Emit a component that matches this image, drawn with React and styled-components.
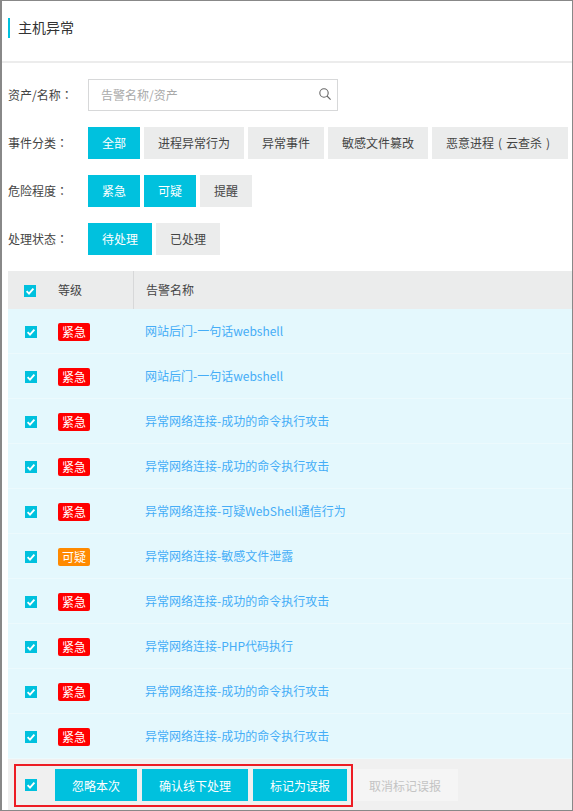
import React from "react";
import styled, { createGlobalStyle } from "styled-components";

const Global = createGlobalStyle`
  html, body { margin: 0; padding: 0; background: #fff; }
  body { font-family: "Microsoft YaHei", "Noto Sans CJK SC", "Liberation Sans", sans-serif; font-size: 12px; color: #444; }
  * { box-sizing: border-box; }
`;

const Frame = styled.div`
  position: relative;
  width: 573px;
  height: 811px;
  overflow: hidden;
  background: #fff;
  border: 1px solid #888;
  border-left-width: 2px;
  padding-left: 6px;
`;
const Header = styled.div`
  height: 62px;
  margin-left: -6px;
  padding: 17px 0 0 6px;
  border-bottom: 2px solid #ececec;
`;
const Title = styled.h1`
  margin: 0;
  height: 20px;
  padding-left: 8px;
  border-left: 2px solid #00c1de;
  font-size: 14px;
  font-weight: 400;
  line-height: 18px;
  color: #333;
`;
const Filters = styled.div`
  display: flex;
  flex-direction: column;
  gap: 16px;
  padding-top: 16px;
`;
const FilterRow = styled.div`
  display: flex;
  align-items: center;
  height: 32px;
`;
const Label = styled.span`
  flex: 0 0 80px;
  margin-bottom: 2px;
  font-size: 12px;
  color: #444;
`;
const Punct = styled.span`
  font-family: "Noto Sans CJK TC", sans-serif;
`;
const Paren = styled.span`
  display: inline-block;
  width: 12px;
  text-align: center;
`;
const SearchBox = styled.div`
  display: flex;
  align-items: center;
  justify-content: space-between;
  width: 250px;
  height: 32px;
  padding: 0 6px 2px 12px;
  border: 1px solid #d7d8d9;
  color: #444;
`;
const Placeholder = styled.span`
  color: #a9a9a9;
`;
const Chips = styled.div`
  display: flex;
  gap: 4px;
`;
const Chip = styled.button`
  height: 32px;
  padding: 0 14px 2px;
  border: 0;
  font: inherit;
  white-space: nowrap;
  background: ${(p) => (p.$active ? "#00c1de" : "#ebecec")};
  color: ${(p) => (p.$active ? "#fff" : "#444")};
`;
const Table = styled.div`
  margin-top: 16px;
  width: 564px;
`;
const HeadRow = styled.div`
  display: flex;
  align-items: center;
  height: 38px;
  background: #ebecec;
  color: #444;
`;
const HeadLevel = styled.div`
  display: flex;
  align-items: center;
  width: 126px;
  height: 100%;
  padding-left: 16px;
  border-right: 1px solid #d7d8d9;
`;
const HeadLevelText = styled.span`
  margin: 0 0 2px 22px;
`;
const HeadName = styled.div`
  margin-bottom: 2px;
  padding-left: 12px;
`;
const Row = styled.div`
  display: flex;
  align-items: center;
  height: 45px;
  padding: 1px 0 0 17px;
  background: #e4f8fd;
  border-bottom: 1px solid #ecfafd;
`;
const Check = styled.span`
  display: inline-flex;
  align-items: center;
  justify-content: center;
  flex: 0 0 12px;
  width: 12px;
  height: 12px;
  margin-top: ${(p) => p.$nudge || 0}px;
  background: #00c1de;
`;
const Badge = styled.span`
  display: inline-flex;
  align-items: center;
  justify-content: center;
  width: 32px;
  height: 18px;
  margin-left: 21px;
  border-radius: 2px;
  background: ${(p) => (p.$warn ? "#ff8a00" : "#ff0000")};
  color: #fff;
  font-size: 12px;
`;
const NameLink = styled.a`
  margin: 0 0 3px 55px;
  color: #45adf7;
  font-size: 12px;
`;
const Footer = styled.div`
  display: flex;
  align-items: center;
  height: 51px;
  padding: 1px 0 0 17px;
  background: #f0f0f0;
`;
const ActionGroup = styled.div`
  display: flex;
  gap: 5px;
  margin-left: 18px;
`;
const Action = styled.button`
  height: 32px;
  padding: 0 17px;
  border: 0;
  font: inherit;
  white-space: nowrap;
  background: ${(p) => (p.$disabled ? "#f5f5f5" : "#00c1de")};
  color: ${(p) => (p.$disabled ? "#c4c4c4" : "#fff")};
`;
const RedMark = styled.div`
  position: absolute;
  left: 12px;
  top: 763px;
  width: 339px;
  height: 43px;
  border: 2px solid #ed1c24;
  pointer-events: none;
`;

const Tick = () => (
  <svg width="10" height="10" viewBox="0 0 10 10" fill="none">
    <path d="M1.6 5.2 L4 7.6 L8.4 2.6" stroke="#fff" strokeWidth="1.9" />
  </svg>
);
const Box = ({ nudge }) => (
  <Check $nudge={nudge}>
    <Tick />
  </Check>
);
const SearchIcon = () => (
  <svg width="12" height="12" viewBox="0 0 12 12" fill="none" stroke="#666" strokeWidth="1.1">
    <circle cx="5" cy="5" r="4.2" />
    <path d="M8 8 L11.6 11.6" />
  </svg>
);

const rows = [
  ["紧急", "网站后门-一句话webshell"],
  ["紧急", "网站后门-一句话webshell"],
  ["紧急", "异常网络连接-成功的命令执行攻击"],
  ["紧急", "异常网络连接-成功的命令执行攻击"],
  ["紧急", "异常网络连接-可疑WebShell通信行为"],
  ["可疑", "异常网络连接-敏感文件泄露"],
  ["紧急", "异常网络连接-成功的命令执行攻击"],
  ["紧急", "异常网络连接-PHP代码执行"],
  ["紧急", "异常网络连接-成功的命令执行攻击"],
  ["紧急", "异常网络连接-成功的命令执行攻击"],
];

export default function App() {
  return (
    <Frame>
      <Global />
      <Header>
        <Title>主机异常</Title>
      </Header>
      <Filters>
        <FilterRow>
          <Label>资产/名称<Punct>：</Punct></Label>
          <SearchBox>
            <Placeholder>告警名称/资产</Placeholder>
            <SearchIcon />
          </SearchBox>
        </FilterRow>
        <FilterRow>
          <Label>事件分类<Punct>：</Punct></Label>
          <Chips>
            <Chip $active>全部</Chip>
            <Chip>进程异常行为</Chip>
            <Chip>异常事件</Chip>
            <Chip>敏感文件篡改</Chip>
            <Chip>恶意进程<Paren>(</Paren>云查杀<Paren>)</Paren></Chip>
          </Chips>
        </FilterRow>
        <FilterRow>
          <Label>危险程度<Punct>：</Punct></Label>
          <Chips>
            <Chip $active>紧急</Chip>
            <Chip $active>可疑</Chip>
            <Chip>提醒</Chip>
          </Chips>
        </FilterRow>
        <FilterRow>
          <Label>处理状态<Punct>：</Punct></Label>
          <Chips>
            <Chip $active>待处理</Chip>
            <Chip>已处理</Chip>
          </Chips>
        </FilterRow>
      </Filters>
      <Table>
        <HeadRow>
          <HeadLevel>
            <Box nudge={1} />
            <HeadLevelText>等级</HeadLevelText>
          </HeadLevel>
          <HeadName>告警名称</HeadName>
        </HeadRow>
        {rows.map(([level, name], i) => (
          <Row key={i}>
            <Box />
            <Badge $warn={level === "可疑"}>{level}</Badge>
            <NameLink>{name}</NameLink>
          </Row>
        ))}
        <Footer>
          <Box />
          <ActionGroup>
            <Action>忽略本次</Action>
            <Action>确认线下处理</Action>
            <Action>标记为误报</Action>
            <Action $disabled>取消标记误报</Action>
          </ActionGroup>
        </Footer>
      </Table>
      <RedMark />
    </Frame>
  );
}
